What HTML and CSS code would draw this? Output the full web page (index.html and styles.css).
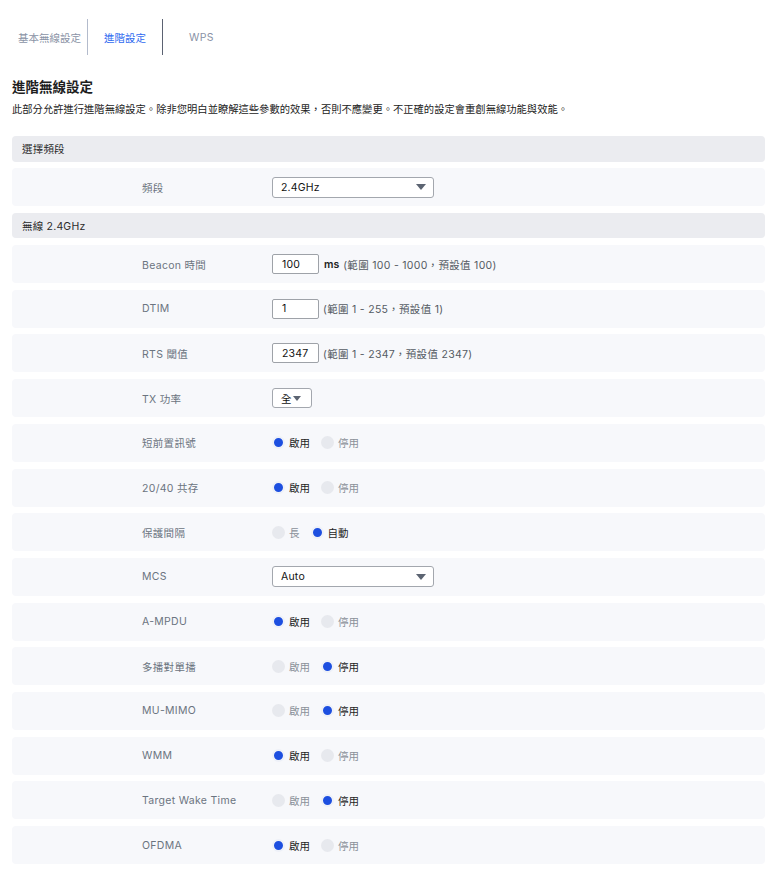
FILE: index.html
```html
<!DOCTYPE html>
<html lang="zh-Hant">
<head>
<meta charset="utf-8">
<title>進階無線設定</title>
<link rel="stylesheet" href="styles.css">
</head>
<body>
<div class="page">
  <nav class="tabs">
    <div class="tab tab-basic">基本無線設定</div>
    <div class="tab tab-adv active">進階設定</div>
    <div class="tab tab-wps">WPS</div>
  </nav>

  <h1 class="title">進階無線設定</h1>
  <p class="desc">此部分允許進行進階無線設定。除非您明白並瞭解這些參數的效果，否則不應變更。不正確的設定會重創無線功能與效能。</p>

  <div class="list">
    <div class="section">選擇頻段</div>
    <div class="row">
      <div class="label">頻段</div>
      <div class="control"><div class="select wide"><span>2.4GHz</span><i class="caret"></i></div></div>
    </div>

    <div class="section">無線 2.4GHz</div>
    <div class="row">
      <div class="label">Beacon 時間</div>
      <div class="control"><div class="input">100</div><span class="unit">ms</span><span class="hint">(範圍 100 - 1000，預設值 100)</span></div>
    </div>
    <div class="row">
      <div class="label">DTIM</div>
      <div class="control"><div class="input">1</div><span class="hint">(範圍 1 - 255，預設值 1)</span></div>
    </div>
    <div class="row">
      <div class="label">RTS 閾值</div>
      <div class="control"><div class="input">2347</div><span class="hint">(範圍 1 - 2347，預設值 2347)</span></div>
    </div>
    <div class="row">
      <div class="label">TX 功率</div>
      <div class="control"><div class="select small"><span>全</span><i class="caret"></i></div></div>
    </div>
    <div class="row">
      <div class="label">短前置訊號</div>
      <div class="control radios"><span class="radio on"><i></i>啟用</span><span class="radio"><i></i>停用</span></div>
    </div>
    <div class="row">
      <div class="label">20/40 共存</div>
      <div class="control radios"><span class="radio on"><i></i>啟用</span><span class="radio"><i></i>停用</span></div>
    </div>
    <div class="row">
      <div class="label">保護間隔</div>
      <div class="control radios"><span class="radio"><i></i>長</span><span class="radio on"><i></i>自動</span></div>
    </div>
    <div class="row">
      <div class="label">MCS</div>
      <div class="control"><div class="select wide"><span>Auto</span><i class="caret"></i></div></div>
    </div>
    <div class="row">
      <div class="label">A-MPDU</div>
      <div class="control radios"><span class="radio on"><i></i>啟用</span><span class="radio"><i></i>停用</span></div>
    </div>
    <div class="row">
      <div class="label">多播對單播</div>
      <div class="control radios"><span class="radio"><i></i>啟用</span><span class="radio on"><i></i>停用</span></div>
    </div>
    <div class="row">
      <div class="label">MU-MIMO</div>
      <div class="control radios"><span class="radio"><i></i>啟用</span><span class="radio on"><i></i>停用</span></div>
    </div>
    <div class="row">
      <div class="label">WMM</div>
      <div class="control radios"><span class="radio on"><i></i>啟用</span><span class="radio"><i></i>停用</span></div>
    </div>
    <div class="row">
      <div class="label">Target Wake Time</div>
      <div class="control radios"><span class="radio"><i></i>啟用</span><span class="radio on"><i></i>停用</span></div>
    </div>
    <div class="row">
      <div class="label">OFDMA</div>
      <div class="control radios"><span class="radio on"><i></i>啟用</span><span class="radio"><i></i>停用</span></div>
    </div>
  </div>
</div>
</body>
</html>
```

FILE: styles.css
```css
html, body {
  margin: 0;
  padding: 0;
  background: #ffffff;
}
body {
  font-family: Inter, "Noto Sans CJK TC", "Noto Sans", sans-serif;
  font-size: 10.5px;
  color: #222;
}
.page {
  padding: 19px 15px 0 12px;
}
.tabs {
  display: flex;
  height: 36px;
}
.tab {
  display: flex;
  align-items: center;
  font-size: 10.5px;
  color: #8a93a6;
}
.tab-basic {
  padding: 0 6px;
  border-right: 1.5px solid #b3bbcc;
}
.tab-adv {
  padding: 0 16px 0 16px;
  border-right: 1.5px solid #5b6272;
  color: #2f6bf0;
}
.tab-wps {
  padding-left: 26px;
  letter-spacing: 0.3px;
}
.title {
  margin: 22px 0 0 0;
  font-size: 13.5px;
  line-height: 20px;
  font-weight: 700;
  color: #1e1e1e;
}
.desc {
  margin: 4px 0 0 0;
  font-size: 10.3px;
  line-height: 16px;
  color: #222;
}
.list {
  margin-top: 19px;
  display: flex;
  flex-direction: column;
  gap: 6.7px;
}
.section {
  height: 25.5px;
  display: flex;
  align-items: center;
  padding-left: 10px;
  background: #ebecf0;
  border-radius: 4px;
  color: #2a2a2a;
  font-size: 10.5px;
  letter-spacing: 0.2px;
}
.row {
  height: 38px;
  display: grid;
  grid-template-columns: 130px 130px 1fr;
  align-items: center;
  background: #f7f8fb;
  border-radius: 4px;
}
.label {
  grid-column: 2;
  color: #6b7480;
  font-size: 10.5px;
  letter-spacing: 0.3px;
}
.control {
  grid-column: 3;
  display: flex;
  align-items: center;
}
.select {
  box-sizing: border-box;
  height: 21px;
  background: #fff;
  border: 1px solid #a3a7ae;
  border-radius: 3px;
  display: flex;
  align-items: center;
  justify-content: space-between;
  color: #111;
  font-size: 10.5px;
  letter-spacing: 0.2px;
}
.select.wide {
  width: 162px;
  padding: 0 7px 0 8px;
}
.select.small {
  width: 40px;
  height: 20px;
  padding: 0 0 0 8px;
  justify-content: flex-start;
  gap: 1px;
}
.caret {
  width: 0;
  height: 0;
  border-left: 5px solid transparent;
  border-right: 5px solid transparent;
  border-top: 6px solid #5c6472;
}
.select.small .caret {
  border-left-width: 4.5px;
  border-right-width: 4.5px;
  border-top-width: 5.5px;
}
.input {
  box-sizing: border-box;
  width: 47px;
  height: 20px;
  background: #fff;
  border: 1px solid #9ea2a8;
  border-radius: 2px;
  padding-left: 9px;
  display: flex;
  align-items: center;
  color: #111;
  font-size: 10.5px;
  letter-spacing: 0.2px;
}
.unit {
  margin-left: 5px;
  font-weight: 600;
  color: #222;
}
.hint {
  margin-left: 4px;
  color: #555b63;
  letter-spacing: 0.3px;
}
.radios {
  gap: 11px;
}
.radio {
  display: flex;
  align-items: center;
  gap: 4px;
  color: #8a9099;
}
.radio i {
  display: block;
  width: 13px;
  height: 13px;
  border-radius: 50%;
  background: #e7e9ee;
  box-sizing: border-box;
}
.radio.on {
  color: #1e1e1e;
}
.radio.on i {
  background: #1d4fe0;
  border: 2.5px solid #eef1f8;
}
```
